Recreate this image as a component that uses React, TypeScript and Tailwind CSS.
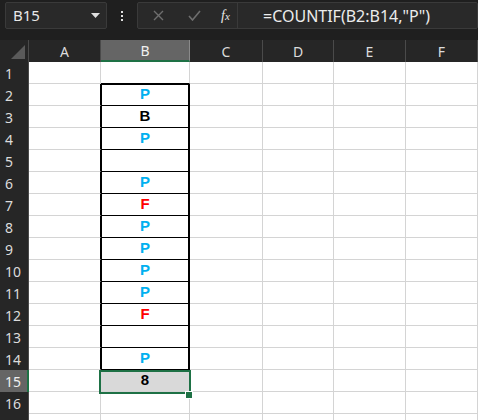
const cols = ["A", "B", "C", "D", "E", "F"];
const colWidths = ["w-[72px]", "w-[89px]", "w-[73px]", "w-[71px]", "w-[72px]", "w-[72px]"];

type Val = { text: string; color: string };
const colB: Record<number, Val> = {
  2: { text: "P", color: "text-[#00b0f0]" },
  3: { text: "B", color: "text-black" },
  4: { text: "P", color: "text-[#00b0f0]" },
  6: { text: "P", color: "text-[#00b0f0]" },
  7: { text: "F", color: "text-[#ff0000]" },
  8: { text: "P", color: "text-[#00b0f0]" },
  9: { text: "P", color: "text-[#00b0f0]" },
  10: { text: "P", color: "text-[#00b0f0]" },
  11: { text: "P", color: "text-[#00b0f0]" },
  12: { text: "F", color: "text-[#ff0000]" },
  14: { text: "P", color: "text-[#00b0f0]" },
};

const rows = Array.from({ length: 17 }, (_, i) => i + 1);

function FormulaBar() {
  return (
    <div className="flex h-[40px] items-start bg-[#1f1f1f] pt-[2px]">
      <div className="ml-[5px] flex h-[27px] w-[102px] items-center justify-between rounded-[2px] border border-[#3a3a3a] bg-[#292929] pl-[7px] pr-[6px]">
        <span className="text-[15px] text-[#e8e8e8]">B15</span>
        <svg width="9" height="5" viewBox="0 0 9 5">
          <path d="M0 0h9L4.5 5z" fill="#e0e0e0" />
        </svg>
      </div>
      <div className="flex h-[27px] w-[30px] flex-col items-center justify-center gap-[2px]">
        <span className="h-[2px] w-[2px] bg-[#e0e0e0]" />
        <span className="h-[2px] w-[2px] bg-[#e0e0e0]" />
        <span className="h-[2px] w-[2px] bg-[#e0e0e0]" />
      </div>
      <div className="flex h-[27px] flex-1 items-center rounded-[2px] border border-[#3a3a3a] bg-[#292929]">
        <div className="flex h-full w-[100px] items-center border-r border-[#3a3a3a]">
          <svg className="ml-[15px]" width="11" height="11" viewBox="0 0 11 11">
            <path d="M1 1l9 9M10 1l-9 9" stroke="#6e6e6e" strokeWidth="1.4" />
          </svg>
          <svg className="ml-[24px]" width="13" height="11" viewBox="0 0 13 11">
            <path d="M1 6l3.5 4L12 1" stroke="#6e6e6e" strokeWidth="1.6" fill="none" />
          </svg>
          <span className="ml-[20px] font-['Liberation_Serif',serif] text-[14px] italic text-[#e8e8e8]">
            f<span className="text-[11px]">x</span>
          </span>
        </div>
        <span className="ml-[25px] text-[16px] text-[#ececec]">=COUNTIF(B2:B14,"P")</span>
      </div>
    </div>
  );
}

function Corner() {
  return (
    <div className="relative h-[22px] w-[29px] shrink-0 border-r border-[#4a4a4a] bg-[#262626]">
      <svg className="absolute bottom-[3px] right-[3px]" width="14" height="14" viewBox="0 0 14 14">
        <path d="M14 0v14H0z" fill="#5a5a5a" />
      </svg>
    </div>
  );
}

export default function App() {
  return (
    <div className="h-[420px] w-[478px] overflow-hidden bg-white font-['Segoe_UI','Noto_Sans',sans-serif]">
      <FormulaBar />
      <div className="flex bg-[#262626]">
        <Corner />
        {cols.map((c, i) => (
          <div
            key={c}
            className={`flex h-[22px] shrink-0 items-center justify-center border-r text-[14px] ${colWidths[i]} ${
              c === "B"
                ? "border-[#8a8a8a] border-b-2 border-b-[#1e7145] bg-[#656565] text-[#f0f0f0]"
                : "border-[#4a4a4a] text-[#dcdcdc]"
            }`}
          >
            {c}
          </div>
        ))}
      </div>
      {rows.map((r) => {
        const v = colB[r];
        const inBlock = r >= 2 && r <= 14;
        const sel = r === 15;
        return (
          <div key={r} className="flex">
            <div
              className={`flex h-[22px] w-[29px] shrink-0 items-center pl-[5px] text-[14px] ${
                sel
                  ? "border-r-2 border-[#1e7145] bg-[#656565] text-[#f0f0f0]"
                  : "border-r border-[#4a4a4a] bg-[#262626] text-[#dcdcdc]"
              }`}
            >
              {r < 17 ? r : ""}
            </div>
            {cols.map((c, i) => {
              if (c === "B") {
                let cls = "border-r border-b border-[#d4d4d4]";
                if (r === 1) cls = "border-r border-r-[#d4d4d4] border-b border-b-black";
                if (inBlock) {
                  cls = `border-r border-b border-black ${
                    r === 2
                      ? "shadow-[inset_1px_0_0_#000,inset_-1px_0_0_#000,inset_0_1px_0_#000]"
                      : "shadow-[inset_1px_0_0_#000,inset_-1px_0_0_#000]"
                  }`;
                }
                if (sel) cls = "relative border-r border-b border-[#d4d4d4] bg-[#d9d9d9]";
                return (
                  <div
                    key={c}
                    className={`flex h-[22px] shrink-0 items-center justify-center font-['Liberation_Sans',Arial,sans-serif] text-[15px] font-bold ${colWidths[i]} ${cls}`}
                  >
                    <span className={sel ? "text-black" : v?.color}>{sel ? "8" : v?.text}</span>
                    {sel && (
                      <>
                        <span className="absolute -left-[2px] top-0 h-[24px] w-[92px] border-2 border-[#1e7145]" />
                        <span className="absolute left-[85px] top-[22px] h-[6px] w-[6px] bg-[#1e7145] outline outline-1 outline-white" />
                      </>
                    )}
                  </div>
                );
              }
              const blackRight = c === "A" && inBlock;
              return (
                <div
                  key={c}
                  className={`h-[22px] shrink-0 border-b border-r border-b-[#d4d4d4] ${
                    blackRight ? "border-r-black" : "border-r-[#d4d4d4]"
                  } ${colWidths[i]}`}
                />
              );
            })}
          </div>
        );
      })}
    </div>
  );
}
